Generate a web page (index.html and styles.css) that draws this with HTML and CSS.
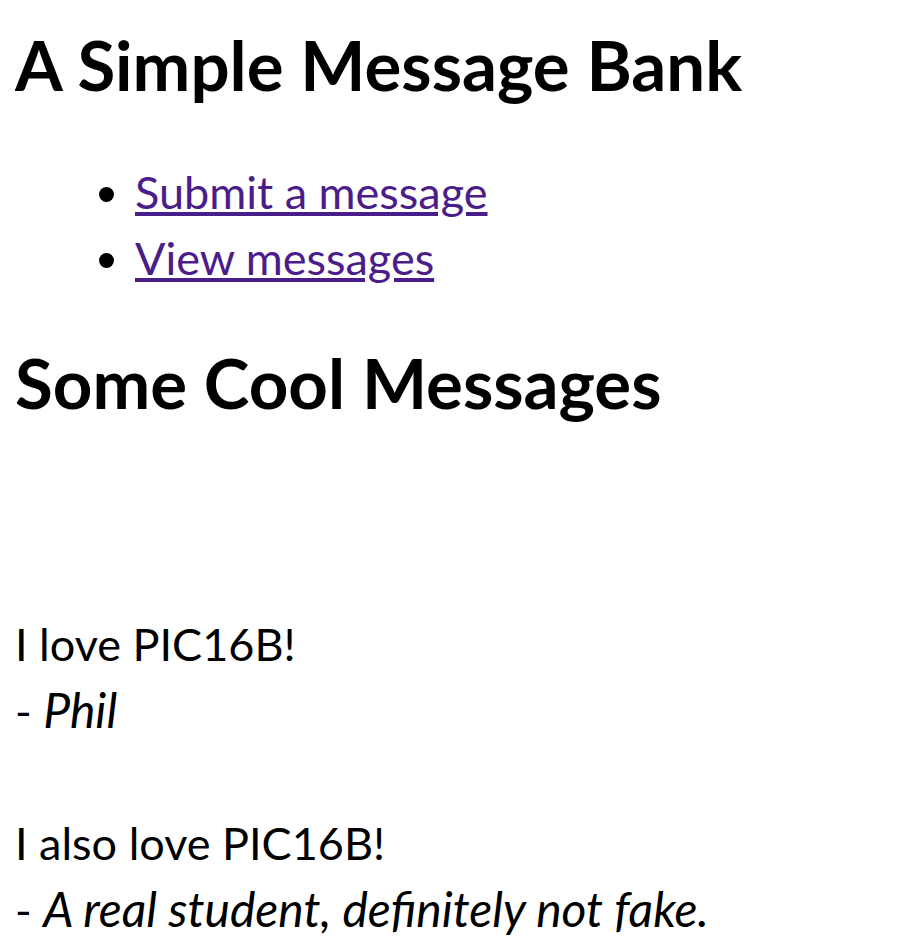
FILE: index.html
```html
<!DOCTYPE html>
<html>
<head>
<meta charset="utf-8">
<title>A Simple Message Bank</title>
<link rel="stylesheet" href="styles.css">
</head>
<body>
<h1 class="title">A Simple Message Bank</h1>
<ul class="nav">
  <li><a href="#">Submit a message</a></li>
  <li><a href="#">View messages</a></li>
</ul>
<h2 class="section">Some Cool Messages</h2>
<div class="messages">
  <p class="message">I love PIC16B!<br>- <i class="author">Phil</i></p>
  <p class="message">I also love PIC16B!<br>- <i class="author">A real student, definitely not fake.</i></p>
</div>
</body>
</html>
```
FILE: styles.css
```css
html, body {
  background: #ffffff;
}
body {
  margin: 0;
  padding: 0 15px;
  font-family: Lato, "Noto Sans", sans-serif;
  font-size: 45px;
  line-height: 66px;
  color: #000000;
}
.title {
  margin: 27px 0 0;
  font-size: 69px;
  line-height: 76px;
  font-weight: 700;
}
.nav {
  margin: 56px 0 0;
  padding-left: 120px;
}
.nav a {
  color: #4b1d8a;
  text-decoration: underline;
}
.section {
  margin: 54px 0 0;
  font-size: 69px;
  line-height: 76px;
  font-weight: 700;
}
.messages {
  margin-top: 190px;
}
.message {
  margin: 0;
}
.message + .message {
  margin-top: 66px;
}
.author {
  font-size: 48px;
}
```
